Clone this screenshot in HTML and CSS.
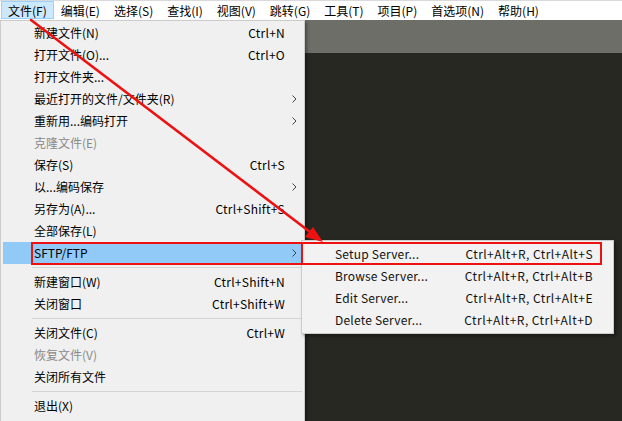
FILE: index.html
```html
<!DOCTYPE html>
<html lang="zh-CN">
<head>
<meta charset="utf-8">
<title>File menu</title>
<link rel="stylesheet" href="styles.css">
</head>
<body>
<div class="app">
  <div class="menubar">
    <span class="mb-item active">文件(F)</span>
    <span class="mb-item">编辑(E)</span>
    <span class="mb-item">选择(S)</span>
    <span class="mb-item">查找(I)</span>
    <span class="mb-item">视图(V)</span>
    <span class="mb-item">跳转(G)</span>
    <span class="mb-item">工具(T)</span>
    <span class="mb-item">项目(P)</span>
    <span class="mb-item">首选项(N)</span>
    <span class="mb-item">帮助(H)</span>
  </div>
  <div class="workspace">
    <div class="tabbar"></div>
    <div class="editor"></div>
  </div>

  <div class="menu main-menu">
    <div class="row"><span class="label">新建文件(N)</span><span class="key">Ctrl+N</span><span class="sub"></span></div>
    <div class="row"><span class="label">打开文件(O)...</span><span class="key">Ctrl+O</span><span class="sub"></span></div>
    <div class="row"><span class="label">打开文件夹...</span><span class="key"></span><span class="sub"></span></div>
    <div class="row"><span class="label">最近打开的文件/文件夹(R)</span><span class="key"></span><span class="sub"><svg width="5" height="8" viewBox="0 0 5 8"><path d="M0.5 0.5 L4 4 L0.5 7.5" fill="none" stroke="#444" stroke-width="1"/></svg></span></div>
    <div class="row"><span class="label">重新用...编码打开</span><span class="key"></span><span class="sub"><svg width="5" height="8" viewBox="0 0 5 8"><path d="M0.5 0.5 L4 4 L0.5 7.5" fill="none" stroke="#444" stroke-width="1"/></svg></span></div>
    <div class="row disabled"><span class="label">克隆文件(E)</span><span class="key"></span><span class="sub"></span></div>
    <div class="row"><span class="label">保存(S)</span><span class="key">Ctrl+S</span><span class="sub"></span></div>
    <div class="row"><span class="label">以...编码保存</span><span class="key"></span><span class="sub"><svg width="5" height="8" viewBox="0 0 5 8"><path d="M0.5 0.5 L4 4 L0.5 7.5" fill="none" stroke="#444" stroke-width="1"/></svg></span></div>
    <div class="row"><span class="label">另存为(A)...</span><span class="key">Ctrl+Shift+S</span><span class="sub"></span></div>
    <div class="row"><span class="label">全部保存(L)</span><span class="key"></span><span class="sub"></span></div>
    <div class="row hover"><span class="label">SFTP/FTP</span><span class="key"></span><span class="sub"><svg width="5" height="8" viewBox="0 0 5 8"><path d="M0.5 0.5 L4 4 L0.5 7.5" fill="none" stroke="#444" stroke-width="1"/></svg></span></div>
    <div class="sep"></div>
    <div class="row"><span class="label">新建窗口(W)</span><span class="key">Ctrl+Shift+N</span><span class="sub"></span></div>
    <div class="row"><span class="label">关闭窗口</span><span class="key">Ctrl+Shift+W</span><span class="sub"></span></div>
    <div class="sep"></div>
    <div class="row"><span class="label">关闭文件(C)</span><span class="key">Ctrl+W</span><span class="sub"></span></div>
    <div class="row disabled"><span class="label">恢复文件(V)</span><span class="key"></span><span class="sub"></span></div>
    <div class="row"><span class="label">关闭所有文件</span><span class="key"></span><span class="sub"></span></div>
    <div class="sep"></div>
    <div class="row"><span class="label">退出(X)</span><span class="key"></span><span class="sub"></span></div>
  </div>

  <div class="menu sub-menu">
    <div class="row"><span class="label">Setup Server...</span><span class="key">Ctrl+Alt+R, Ctrl+Alt+S</span><span class="sub"></span></div>
    <div class="row"><span class="label">Browse Server...</span><span class="key">Ctrl+Alt+R, Ctrl+Alt+B</span><span class="sub"></span></div>
    <div class="row"><span class="label">Edit Server...</span><span class="key">Ctrl+Alt+R, Ctrl+Alt+E</span><span class="sub"></span></div>
    <div class="row"><span class="label">Delete Server...</span><span class="key">Ctrl+Alt+R, Ctrl+Alt+D</span><span class="sub"></span></div>
  </div>

  <div class="mark mark-main"></div>
  <div class="mark mark-sub"></div>

  <svg class="arrow" width="622" height="421" viewBox="0 0 622 421">
    <line x1="31" y1="20" x2="314" y2="235" stroke="#ee1111" stroke-width="2.6" stroke-linecap="round"/>
    <polygon points="323,242 305,237 313,227" fill="#ee1111"/>
  </svg>
</div>
</body>
</html>
```

FILE: styles.css
```css
* { box-sizing: border-box; }
html, body {
  margin: 0;
  padding: 0;
}
body {
  width: 622px;
  height: 421px;
  overflow: hidden;
  background: #272822;
  font-family: "Noto Sans CJK SC", "Noto Sans", sans-serif;
  font-size: 12px;
  color: #000;
}
.app {
  position: relative;
  width: 622px;
  height: 421px;
  display: flex;
  flex-direction: column;
}
.menubar {
  height: 20px;
  background: #fff;
  border-top: 1px solid #d9d9d9;
  display: flex;
  align-items: stretch;
  padding-left: 1px;
}
.mb-item {
  display: flex;
  align-items: center;
  padding: 0 6px;
  line-height: 17px;
  height: 18px;
  border: 1px solid transparent;
  color: #000;
  white-space: nowrap;
}
.mb-item.active {
  background: #cce8ff;
  border-color: #99d1ff;
}
.workspace {
  flex: 1;
  display: flex;
  flex-direction: column;
}
.tabbar {
  height: 33px;
  background: #6e6e68;
}
.editor {
  flex: 1;
  background: #272822;
}

.menu {
  position: absolute;
  background: #f0f0f0;
  border: 1px solid #cccccc;
  box-shadow: 2px 2px 3px rgba(0, 0, 0, 0.35);
  padding: 1px 2px 2px 2px;
}
.main-menu {
  left: 0;
  top: 20px;
  width: 305px;
  height: 430px;
}
.sub-menu {
  left: 301px;
  top: 240px;
  width: 313px;
  padding: 2px;
  background: #f2f2f2;
}
.row {
  display: grid;
  grid-template-columns: 31px 1fr auto 17px;
  align-items: center;
  height: 22px;
  line-height: 22px;
  white-space: nowrap;
}
.row .label { grid-column: 2; }
.row .key {
  grid-column: 3;
  text-align: right;
  letter-spacing: 0.25px;
}
.row .sub {
  grid-column: 4;
  display: flex;
  justify-content: flex-end;
  padding-right: 5px;
}
.row .sub svg { display: block; }
.sub-menu .row {
  grid-template-columns: 31px 1fr auto 18px;
  color: #111;
}
.sub-menu .row .label { letter-spacing: 0.2px; }
.sub-menu .row .key { letter-spacing: 0.45px; }
.row.disabled { color: #8a8a8a; }
.row.hover { background: #91c9f7; }
.sep {
  height: 7px;
  margin-left: 29px;
  padding-top: 3px;
}
.sep::before {
  content: "";
  display: block;
  height: 1px;
  background: #d4d4d4;
}

.mark {
  position: absolute;
  border: 2px solid #ee1111;
}
.mark-main {
  left: 31px;
  top: 242px;
  width: 272px;
  height: 23px;
}
.mark-sub {
  left: 301px;
  top: 242px;
  width: 301px;
  height: 23px;
}
.arrow {
  position: absolute;
  left: 0;
  top: 0;
  pointer-events: none;
}
```
